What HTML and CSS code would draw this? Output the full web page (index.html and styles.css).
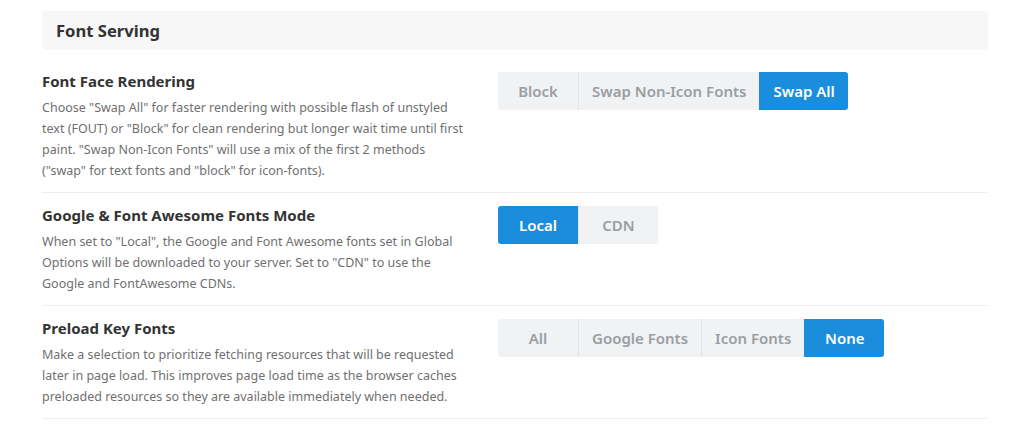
FILE: index.html
```html
<!DOCTYPE html>
<html>
<head>
<meta charset="utf-8">
<link rel="stylesheet" href="styles.css">
</head>
<body>
<div class="panel">
  <div class="section-head">Font Serving</div>

  <div class="row">
    <div class="info">
      <h3 class="title">Font Face Rendering</h3>
      <p class="desc">Choose "Swap All" for faster rendering with possible flash of unstyled text (FOUT) or "Block" for clean rendering but longer wait time until first paint. "Swap Non-Icon Fonts" will use a mix of the first 2 methods ("swap" for text fonts and "block" for icon-fonts).</p>
    </div>
    <div class="control">
      <div class="btn-group">
        <span class="btn">Block</span>
        <span class="btn">Swap Non-Icon Fonts</span>
        <span class="btn active">Swap All</span>
      </div>
    </div>
  </div>

  <div class="row">
    <div class="info">
      <h3 class="title">Google &amp; Font Awesome Fonts Mode</h3>
      <p class="desc">When set to "Local", the Google and Font Awesome fonts set in Global Options will be downloaded to your server. Set to "CDN" to use the Google and FontAwesome CDNs.</p>
    </div>
    <div class="control">
      <div class="btn-group">
        <span class="btn active">Local</span>
        <span class="btn">CDN</span>
      </div>
    </div>
  </div>

  <div class="row">
    <div class="info">
      <h3 class="title">Preload Key Fonts</h3>
      <p class="desc">Make a selection to prioritize fetching resources that will be requested later in page load. This improves page load time as the browser caches preloaded resources so they are available immediately when needed.</p>
    </div>
    <div class="control">
      <div class="btn-group">
        <span class="btn">All</span>
        <span class="btn">Google Fonts</span>
        <span class="btn">Icon Fonts</span>
        <span class="btn active">None</span>
      </div>
    </div>
  </div>
</div>
</body>
</html>
```

FILE: styles.css
```css
html, body {
  margin: 0;
  padding: 0;
  background: #ffffff;
}

body {
  font-family: "Noto Sans", "Open Sans", sans-serif;
  color: #333333;
}

.panel {
  width: 946px;
  margin: 11px 0 0 42px;
}

.section-head {
  background: #f7f7f7;
  border-radius: 3px;
  height: 39px;
  line-height: 39px;
  padding: 0 14px;
  font-size: 16.6px;
  font-weight: 700;
  color: #333333;
  margin-bottom: 9px;
}

.row {
  display: flex;
  padding: 11px 0 11px;
  border-bottom: 1px solid #eeeeee;
}

.info {
  width: 430px;
  margin-right: 26px;
}

.title {
  margin: 0;
  font-size: 15px;
  line-height: 22px;
  font-weight: 700;
  color: #333333;
}

.desc {
  margin: 5px 0 0;
  font-size: 12.5px;
  line-height: 21px;
  color: #707070;
}

.control {
  flex: 1;
  padding-top: 2px;
}

.btn-group {
  display: inline-flex;
  background: #f1f2f4;
  border-radius: 3px;
  overflow: hidden;
}

.btn {
  min-width: 80px;
  box-sizing: border-box;
  height: 38px;
  line-height: 38px;
  padding: 0 13px;
  text-align: center;
  font-size: 15px;
  font-weight: 600;
  color: #9a9ea3;
  border-left: 1px solid #e2e3e5;
}

.btn:first-child {
  border-left: none;
}

.btn.active {
  background: #1a8edc;
  color: #ffffff;
  border-left-color: #1a8edc;
}
```
